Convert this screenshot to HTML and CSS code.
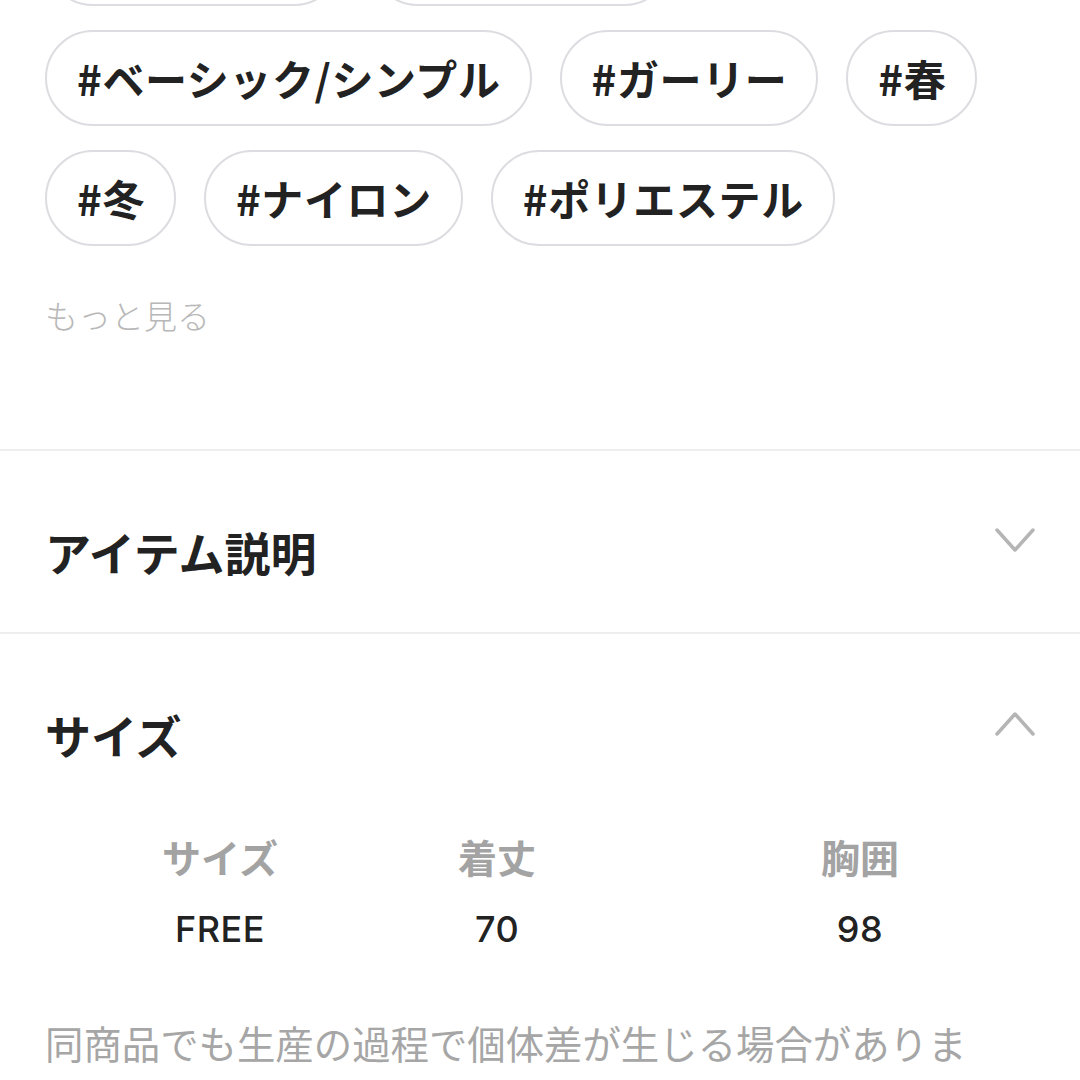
FILE: index.html
```html
<!DOCTYPE html>
<html lang="ja">
<head>
<meta charset="utf-8">
<link rel="stylesheet" href="styles.css">
</head>
<body>
<div class="page">
  <div class="tags">
    <span class="tag">#カジュアル</span>
    <span class="tag">#カットソー</span>
    <span class="tag">#ベーシック/シンプル</span>
    <span class="tag">#ガーリー</span>
    <span class="tag">#春</span>
    <span class="tag">#冬</span>
    <span class="tag">#ナイロン</span>
    <span class="tag">#ポリエステル</span>
  </div>
  <div class="more">もっと見る</div>

  <div class="divider"></div>

  <section class="section section-desc">
    <div class="section-head">
      <h2 class="section-title">アイテム説明</h2>
      <svg class="chev chev-down" width="40" height="26" viewBox="0 0 40 26"><polyline points="2,3 20,23 38,3" fill="none" stroke="#b5b5b5" stroke-width="3.5" stroke-linecap="round" stroke-linejoin="round"/></svg>
    </div>
  </section>

  <div class="divider"></div>

  <section class="section section-size">
    <div class="section-head">
      <h2 class="section-title">サイズ</h2>
      <svg class="chev chev-up" width="40" height="26" viewBox="0 0 40 26"><polyline points="2,23 20,3 38,23" fill="none" stroke="#b5b5b5" stroke-width="3.5" stroke-linecap="round" stroke-linejoin="round"/></svg>
    </div>
    <div class="size-table">
      <div class="th">サイズ</div>
      <div class="th">着丈</div>
      <div class="th">胸囲</div>
      <div class="td">FREE</div>
      <div class="td">70</div>
      <div class="td">98</div>
    </div>
    <p class="note">同商品でも生産の過程で個体差が生じる場合がありま</p>
  </section>
</div>
</body>
</html>
```

FILE: styles.css
```css
html, body {
  margin: 0;
  padding: 0;
  background: #ffffff;
}
body {
  width: 1080px;
  height: 1080px;
  overflow: hidden;
  font-family: "Noto Sans CJK JP", "Noto Sans", sans-serif;
  color: #222222;
}
.page {
  width: 1080px;
}
.tags {
  display: flex;
  flex-wrap: wrap;
  gap: 24px 28px;
  padding: 0 45px;
  margin-top: -90px;
}
.tag {
  display: inline-flex;
  align-items: center;
  box-sizing: border-box;
  height: 96px;
  padding: 0 29px 0 30px;
  border: 2px solid #dcdce1;
  border-radius: 48px;
  font-size: 42px;
  font-weight: 700;
  letter-spacing: 0.6px;
  line-height: 1;
  color: #222222;
  white-space: nowrap;
}
.more {
  margin: 49px 0 114px;
  padding: 0 45px;
  font-size: 33px;
  font-weight: 300;
  line-height: 40px;
  color: #b8b8b8;
}
.divider {
  height: 2px;
  background: #eeeeee;
}
.section {
  padding: 0 45px;
}
.section-desc {
  padding-top: 70px;
  padding-bottom: 51px;
}
.section-size {
  padding-top: 70px;
}
.section-head {
  display: flex;
  justify-content: space-between;
  align-items: flex-start;
}
.section-title {
  margin: 0;
  font-size: 46px;
  font-weight: 700;
  line-height: 60px;
  color: #222222;
}
.chev-down {
  margin-top: 6px;
}
.chev-up {
  margin-top: 7px;
}
.size-table {
  display: grid;
  grid-template-columns: 350px 204px 522px;
  margin-top: 67px;
  row-gap: 23px;
}
.th {
  text-align: center;
  font-size: 39px;
  font-weight: 700;
  line-height: 50px;
  color: #a3a3a3;
}
.td {
  text-align: center;
  font-family: "Inter", "Lato", sans-serif;
  font-size: 36px;
  font-weight: 500;
  letter-spacing: 0.5px;
  line-height: 50px;
  color: #222222;
}
.note {
  margin: 60px 0 0;
  font-size: 38.4px;
  line-height: 56px;
  color: #a6a6a6;
  white-space: nowrap;
}
```
